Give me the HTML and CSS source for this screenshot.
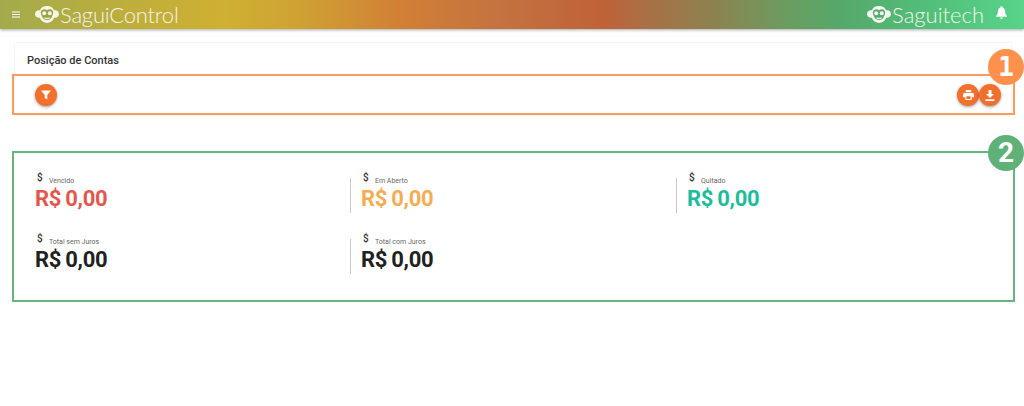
FILE: index.html
```html
<!DOCTYPE html>
<html lang="pt-BR">
<head>
<meta charset="utf-8">
<title>SaguiControl</title>
<link rel="stylesheet" href="styles.css">
</head>
<body>
<header class="topbar">
  <div class="brand">
    <svg class="menu-icon" viewBox="0 0 8 7" width="8" height="7"><path d="M0 1h8M0 3.500h8M0 6h8" stroke="#fff" stroke-width="1"/></svg>
    <svg class="monkey" viewBox="0 0 24 17" width="24" height="17"><path fill="#f6f6e6" d="M12 0c3.500 0 6 1.600 7.200 4.200C21.800 3.800 24 5.500 24 8s-2.200 4.200-4.800 3.800C18 15 15.200 17 12 17s-6-2-7.200-5.200C2.200 12.200 0 10.500 0 8s2.200-4.200 4.800-3.800C6 1.600 8.500 0 12 0z"/><path fill="#9ea445" d="M12 4.300c1-.9 2.100-1.300 3.200-1.100 2 .3 3.200 2 3 3.800-.2 1.600-1 2.500-1.300 3.600-.5 2-2.500 3.400-4.900 3.400s-4.400-1.400-4.900-3.400C6.800 9.500 6 8.600 5.800 7c-.2-1.800 1-3.500 3-3.800 1.100-.2 2.200.2 3.200 1.100z"/><circle cx="9.200" cy="7.200" r="2" fill="#f6f6e6"/><circle cx="14.800" cy="7.200" r="2" fill="#f6f6e6"/><path d="M9.500 11.700c1.600 1 3.400 1 5 0" fill="none" stroke="#f6f6e6" stroke-width="1.100"/></svg>
    <span class="brand-name">SaguiControl</span>
  </div>
  <div class="brand brand-right">
    <svg class="monkey" viewBox="0 0 24 17" width="24" height="17"><path fill="#f6f6f0" d="M12 0c3.500 0 6 1.600 7.200 4.200C21.800 3.800 24 5.500 24 8s-2.200 4.200-4.800 3.800C18 15 15.200 17 12 17s-6-2-7.200-5.200C2.200 12.200 0 10.500 0 8s2.200-4.200 4.800-3.800C6 1.600 8.500 0 12 0z"/><path fill="#55ab70" d="M12 4.300c1-.9 2.100-1.300 3.200-1.100 2 .3 3.200 2 3 3.800-.2 1.600-1 2.500-1.300 3.600-.5 2-2.500 3.400-4.900 3.400s-4.400-1.400-4.900-3.400C6.800 9.500 6 8.600 5.800 7c-.2-1.800 1-3.500 3-3.800 1.100-.2 2.200.2 3.200 1.100z"/><circle cx="9.200" cy="7.200" r="2" fill="#f6f6f0"/><circle cx="14.800" cy="7.200" r="2" fill="#f6f6f0"/><path d="M9.500 11.700c1.600 1 3.400 1 5 0" fill="none" stroke="#f6f6f0" stroke-width="1.100"/></svg>
    <span class="brand-name brand-name-right">Saguitech</span>
    <svg class="bell" viewBox="0 0 12 14" width="11" height="13"><path fill="#fff" d="M6 0a1 1 0 0 1 1 1v.6c2 .5 3 2.200 3 4.400 0 2.500.6 3.500 2 5v.5H0V11c1.400-1.500 2-2.500 2-5 0-2.200 1-3.900 3-4.400V1a1 1 0 0 1 1-1zM4.500 12.500h3a1.500 1.500 0 0 1-3 0z"/></svg>
  </div>
</header>

<main class="content">
  <section class="card card-filters">
    <h1 class="card-title">Posição de Contas</h1>
    <div class="toolbar">
      <button class="fab" type="button" aria-label="Filtrar">
        <svg viewBox="0 0 10 10" width="10" height="10"><path fill="#fff" d="M0 .5h10L6.300 5v4.500L3.700 8V5z"/></svg>
      </button>
      <div class="toolbar-actions">
        <button class="fab" type="button" aria-label="Imprimir">
          <svg viewBox="0 0 12 11" width="11" height="10"><path fill="#fff" d="M3 0h6v2.500H3zM1.500 3.200h9A1.500 1.500 0 0 1 12 4.700V8H9.500v3h-7V8H0V4.700a1.500 1.500 0 0 1 1.500-1.500zM3.700 7v2.800h4.600V7z"/></svg>
        </button>
        <button class="fab" type="button" aria-label="Baixar">
          <svg viewBox="0 0 10 11" width="10" height="11"><path fill="#fff" d="M3.500 0h3v4H9L5 8 1 4h2.500zM.5 9.300h9V11h-9z"/></svg>
        </button>
      </div>
    </div>
  </section>

  <section class="card card-stats">
    <div class="stat">
      <div class="stat-head"><span class="dollar">$</span><span class="stat-label">Vencido</span></div>
      <div class="stat-value red">R$ 0,00</div>
    </div>
    <div class="stat divided">
      <div class="stat-head"><span class="dollar">$</span><span class="stat-label">Em Aberto</span></div>
      <div class="stat-value amber">R$ 0,00</div>
    </div>
    <div class="stat divided">
      <div class="stat-head"><span class="dollar">$</span><span class="stat-label">Quitado</span></div>
      <div class="stat-value teal">R$ 0,00</div>
    </div>
    <div class="stat">
      <div class="stat-head"><span class="dollar">$</span><span class="stat-label">Total sem Juros</span></div>
      <div class="stat-value">R$ 0,00</div>
    </div>
    <div class="stat divided">
      <div class="stat-head"><span class="dollar">$</span><span class="stat-label">Total com Juros</span></div>
      <div class="stat-value">R$ 0,00</div>
    </div>
  </section>
</main>

<div class="callout callout-orange"><span class="callout-num num-one">1</span></div>
<div class="callout callout-green"><span class="callout-num num-two">2</span></div>
</body>
</html>
```

FILE: styles.css
```css
* { box-sizing: border-box; }
html, body { margin: 0; height: 406px; overflow: hidden; background: #fff; }
body { font-family: Roboto, "Liberation Sans", sans-serif; color: #212121; position: relative; }

.topbar {
  height: 29px;
  display: flex;
  justify-content: space-between;
  align-items: center;
  padding: 0 17px 0 12px;
  background: linear-gradient(90deg, #a2ab4c 0%, #bdae3c 12%, #cfb032 22%, #cfa233 29%, #d18035 39%, #c47240 49%, #bf6238 59%, #aa6f45 63%, #8b8350 70%, #6f9a5e 76%, #55a86a 82%, #52c07a 91%, #58d389 100%);
  box-shadow: 0 1px 3px rgba(0,0,0,.35);
}
.brand { display: flex; align-items: center; }
.menu-icon { margin-right: 15px; }
.brand-name { color: #f4f4ea; font-family: Lato, sans-serif; font-weight: 300; font-size: 22px; letter-spacing: -.2px; margin-left: 1px; line-height: 29px; }
.brand-name-right { letter-spacing: 0; margin-left: 1px; }
.bell { margin-left: 12px; margin-top: -4px; }

.content { padding: 14px 13px 0 15px; }
.card { background: #fff; box-shadow: 0 0 2px rgba(0,0,0,.12); }
.card-filters { height: 72px; padding: 11px 10px 0 12px; }
.card-title { margin: 0; font-size: 11px; font-weight: 500; line-height: 14px; color: #333; }
.toolbar { display: flex; justify-content: space-between; align-items: center; margin-top: 16px; padding: 0 0 0 8px; }
.toolbar-actions { display: flex; }
.fab {
  width: 22px; height: 22px; padding: 0; border: 0; border-radius: 50%;
  background: #f26f2c; display: flex; align-items: center; justify-content: center;
  box-shadow: 0 1px 3px rgba(0,0,0,.4);
}

.card-stats {
  margin-top: 40px;
  height: 146px;
  padding: 16px 20px 0;
  display: grid;
  grid-template-columns: repeat(3, 326px);
  grid-auto-rows: 61px;
  box-shadow: 0 -1px 2px rgba(0,0,0,.05);
}
.stat { position: relative; }
.divided::before {
  content: "";
  position: absolute;
  left: -11.500px; top: 7px;
  width: 1.500px; height: 35px;
  background: #c8c8c8;
}
.stat-head { display: flex; align-items: flex-start; height: 15px; padding-left: 2px; }
.dollar { font-size: 10px; font-weight: 500; line-height: 14px; color: #333; width: 12px; }
.stat-label { font-size: 7px; color: #666; line-height: 8px; margin-top: 6px; }
.stat-value { font-size: 22px; font-weight: 700; line-height: 26px; letter-spacing: -.3px; word-spacing: -1px; color: #212121; }
.red { color: #e2574f; }
.amber { color: #f3ad54; }
.teal { color: #1fbc9c; }

.callout { position: absolute; left: 12px; width: 1003px; border-style: solid; border-width: 2px; pointer-events: none; }
.callout-orange { top: 74px; height: 41px; border-color: #ff9a5e; }
.callout-green { top: 151px; height: 151px; border-color: #66b57f; }
.callout-num {
  position: absolute; right: -11px; width: 36px; height: 36px; border-radius: 50%;
  color: #fff; font-weight: 700; font-size: 28px; line-height: 36px; text-align: center;
}
.num-one { top: -27px; background: #ff914d; font-family: "DejaVu Sans Mono", monospace; font-size: 26px; }
.num-two { top: -18px; background: #5fb177; }
```
